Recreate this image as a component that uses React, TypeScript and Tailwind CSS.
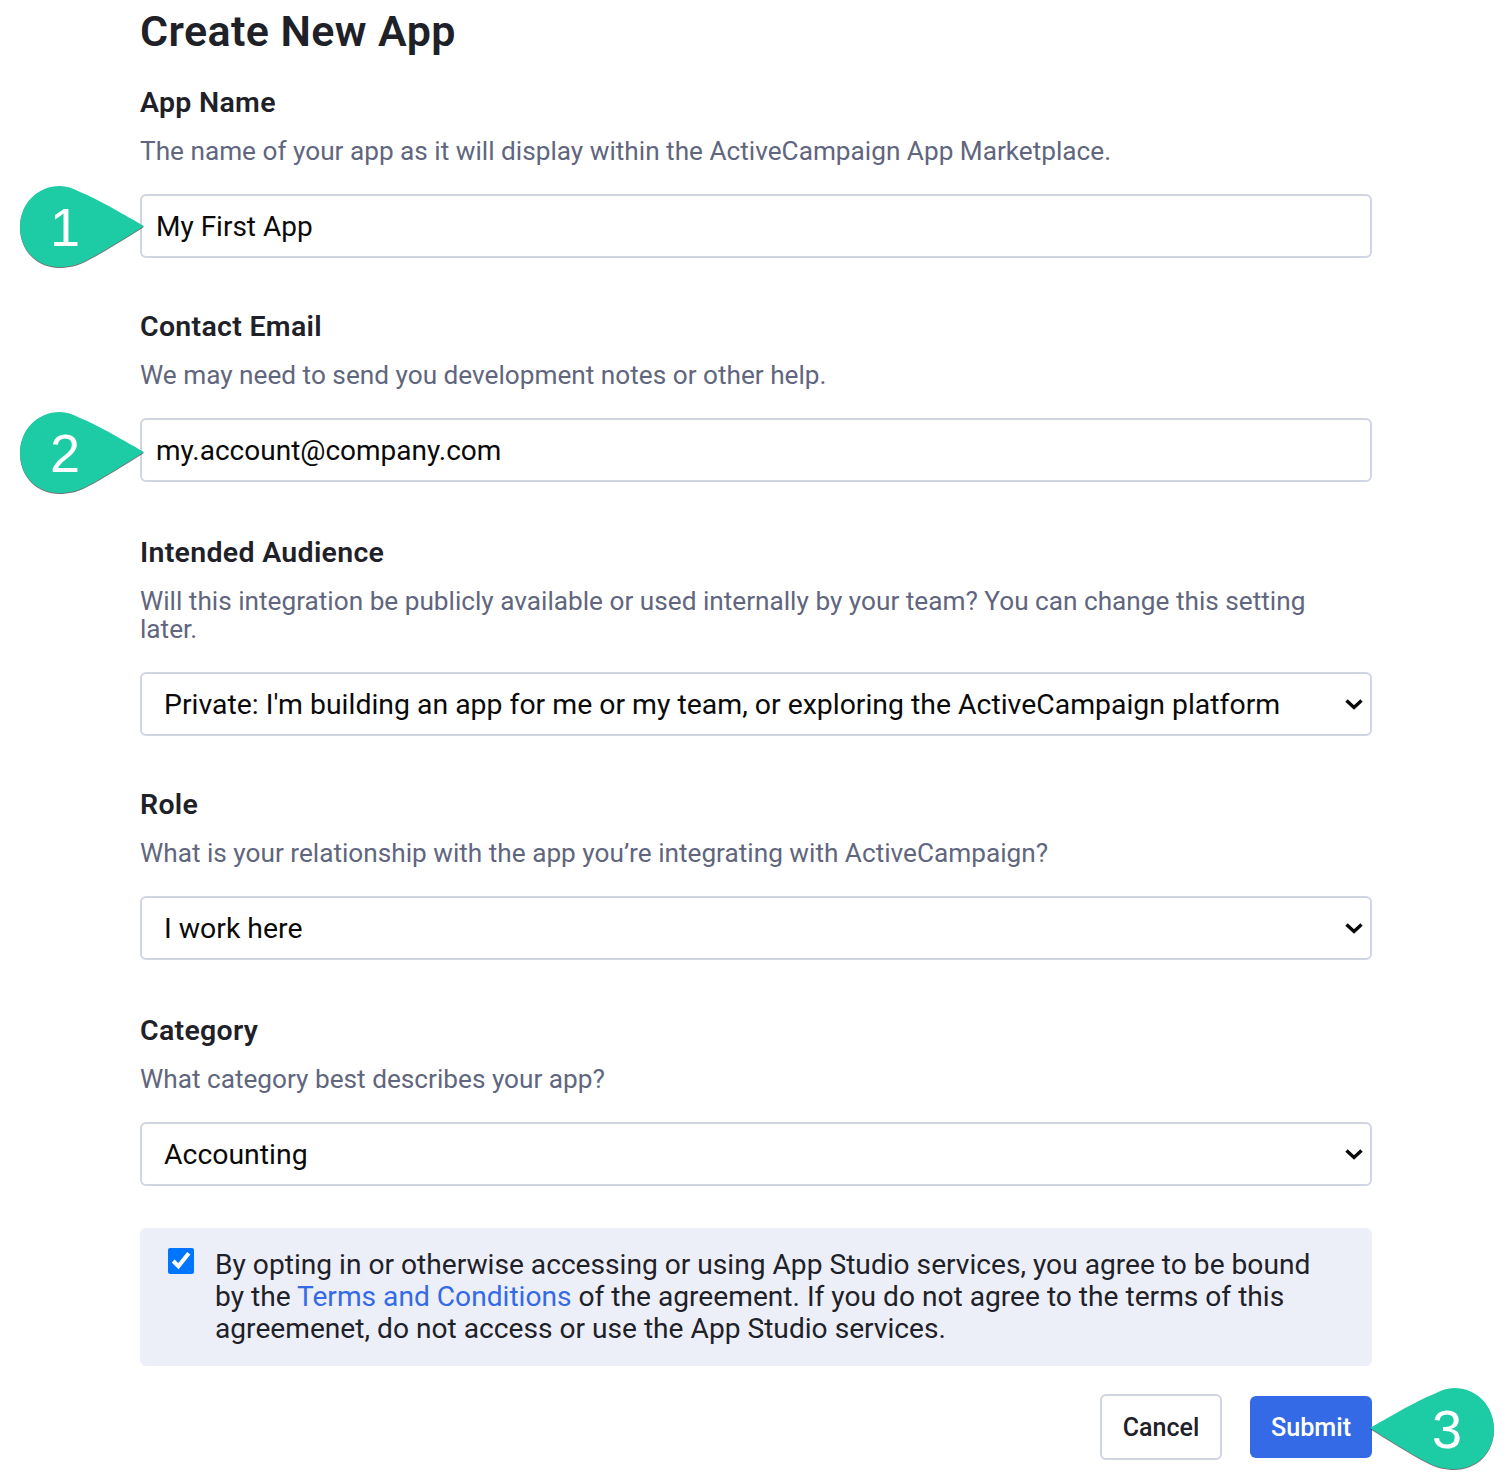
import React from "react";

const font = "font-['Roboto',sans-serif]";

function Callout({ n, className, flip }: { n: string; className: string; flip?: boolean }) {
  return (
    <div className={`absolute w-[128px] h-[86px] ${className}`}>
      <svg width="128" height="86" viewBox="0 0 128 86" className={`drop-shadow-[0px_1.5px_0.5px_rgba(0,0,0,0.55)] ${flip ? "-scale-x-100" : ""}`}>
        <path
          d="M126 42 C110 33 80 15 62 8 C55 4 48 2 42 2 C19 2 2 20 2 43 C2 66 19 83 42 83 C50 83 60 81 69 76 C85 68 110 52 126 42 Z"
          fill="#1dcca4"
        />
      </svg>
      <span className={`absolute top-[12px] ${flip ? "right-[14px]" : "left-[12px]"} w-[70px] text-center text-[54px] leading-[62px] text-white font-['Liberation_Sans',sans-serif]`}>
        {n}
      </span>
    </div>
  );
}

function Chevron() {
  return (
    <svg width="20" height="12" viewBox="0 0 20 12" className="absolute right-[8px] top-[26px] pointer-events-none">
      <path d="M2.5 2.5 L10 9.5 L17.5 2.5" fill="none" stroke="#0a0a0a" strokeWidth="3.4" />
    </svg>
  );
}

function Field({ label, hint, mt, children }: { label: string; hint: string; mt: string; children: React.ReactNode }) {
  return (
    <div className={mt}>
      <div className="h-[36px] text-[28.5px] leading-[38px] tracking-[0.3px] font-semibold text-[#1f2129]">{label}</div>
      <p className="mt-[17px] max-w-[1190px] text-[26.2px] leading-[28px] text-[#5f667e]">{hint}</p>
      <div className="mt-[29px]">{children}</div>
    </div>
  );
}

function TextBox({ value }: { value: string }) {
  return (
    <input
      defaultValue={value}
      className="block w-full h-[64px] rounded-[6px] border-2 border-[#d0d5e3] bg-white pl-[14px] pt-[1px] text-[28px] text-[#0a0a0a] outline-none"
    />
  );
}

function Select({ value }: { value: string }) {
  return (
    <div className="relative">
      <select
        defaultValue={value}
        className="block w-full h-[64px] appearance-none rounded-[6px] border-2 border-[#d0d5e3] bg-white pl-[22px] pt-[2px] text-[28.4px] text-[#0a0a0a] outline-none"
      >
        <option>{value}</option>
      </select>
      <Chevron />
    </div>
  );
}

export default function App() {
  return (
    <div className={`relative w-[1510px] h-[1474px] bg-white overflow-hidden ${font}`}>
      <div className="w-[1232px] ml-[140px]">
        <h1 className="h-[62px] text-[43px] leading-[62px] tracking-[0.4px] font-semibold text-[#1f2129]">Create New App</h1>

        <Field mt="mt-[22px]" label="App Name" hint="The name of your app as it will display within the ActiveCampaign App Marketplace.">
          <TextBox value="My First App" />
        </Field>
        <Field mt="mt-[50px]" label="Contact Email" hint="We may need to send you development notes or other help.">
          <TextBox value="my.account@company.com" />
        </Field>
        <Field mt="mt-[52px]" label="Intended Audience" hint="Will this integration be publicly available or used internally by your team? You can change this setting later.">
          <Select value="Private: I'm building an app for me or my team, or exploring the ActiveCampaign platform" />
        </Field>
        <Field mt="mt-[50px]" label="Role" hint="What is your relationship with the app you’re integrating with ActiveCampaign?">
          <Select value="I work here" />
        </Field>
        <Field mt="mt-[52px]" label="Category" hint="What category best describes your app?">
          <Select value="Accounting" />
        </Field>

        <div className="mt-[42px] h-[138px] rounded-[6px] bg-[#eceff7] flex pl-[28px] pr-[40px] pt-[20px]">
          <input type="checkbox" defaultChecked className="w-[26px] h-[26px] shrink-0 accent-[#0075ff] m-0" />
          <p className="ml-[21px] pt-[1px] text-[28.15px] leading-[32px] text-[#1f2129]">
            By opting in or otherwise accessing or using App Studio services, you agree to be bound by the{" "}
            <a className="text-[#356ae6]">Terms and Conditions</a> of the agreement. If you do not agree to the terms of this agreemenet, do not access or use the App Studio services.
          </p>
        </div>

        <div className="mt-[28px] flex justify-end items-center gap-[28px]">
          <button className="w-[122px] h-[66px] pt-[2px] rounded-[6px] border-2 border-[#d0d5e3] bg-white text-[25px] font-medium text-[#1f2129]">Cancel</button>
          <button className="w-[122px] h-[62px] pt-[2px] rounded-[6px] bg-[#356ae6] text-[25.2px] font-medium text-white">Submit</button>
        </div>
      </div>

      <Callout n="1" className="left-[18px] top-[184px]" />
      <Callout n="2" className="left-[18px] top-[410px]" />
      <Callout n="3" className="left-[1368px] top-[1386px]" flip />
    </div>
  );
}
